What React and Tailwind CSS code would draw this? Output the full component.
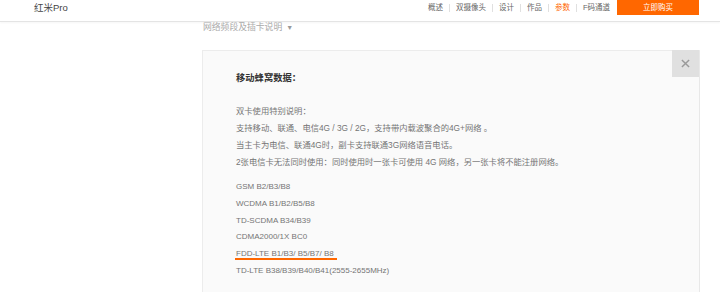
import React from 'react';

const navItems = ['概述', '双摄像头', '设计', '作品', '参数', 'F码通道'];

const notes = [
    '双卡使用特别说明：',
    '支持移动、联通、电信4G / 3G / 2G，支持带内载波聚合的4G+网络 。',
    '当主卡为电信、联通4G时，副卡支持联通3G网络语音电话。',
    '2张电信卡无法同时使用：同时使用时一张卡可使用 4G 网络，另一张卡将不能注册网络。',
];

const bands = [
    'GSM B2/B3/B8',
    'WCDMA B1/B2/B5/B8',
    'TD-SCDMA B34/B39',
    'CDMA2000/1X BC0',
    'FDD-LTE B1/B3/ B5/B7/ B8',
    'TD-LTE B38/B39/B40/B41(2555-2655MHz)',
];

const App = () => {
    return (
        <div
            className="w-[720px] h-[292px] overflow-hidden bg-white"
            style={{ fontFamily: '"Liberation Sans", "Noto Sans CJK SC", sans-serif' }}
        >
            {/* Header */}
            <div className="h-[22px] border-b border-[#e4e4e4] shadow-[0_1px_2px_rgba(0,0,0,0.04)] flex items-start justify-between pl-[34px] pr-[21px]">
                <div className="text-[9.5px] leading-[15px] text-[#444]">红米Pro</div>
                <div className="flex items-start">
                    <div className="flex items-center h-[15px] mr-[7px]">
                        {navItems.map((item, index) => (
                            <div key={index} className="flex items-center">
                                {index > 0 && <span className="w-px h-[8px] bg-[#e0e0e0] mx-[6px]"></span>}
                                <span className={`text-[7.5px] ${item === '参数' ? 'text-[#ff6700]' : 'text-[#666]'}`}>{item}</span>
                            </div>
                        ))}
                    </div>
                    <div className="w-[82px] h-[15px] bg-[#ff6700] text-white text-[7.5px] flex items-center justify-center">
                        立即购买
                    </div>
                </div>
            </div>

            {/* Content */}
            <div className="pl-[202px] pr-[20px]">
                <div className="h-[12px] flex items-center text-[8.8px] text-[#aaa] pl-px">
                    网络频段及插卡说明
                    <span className="ml-[4px] text-[7px] text-[#999]">▼</span>
                </div>

                <div className="relative mt-[16px] h-[260px] bg-[#fafafa] border border-[#ececec] border-r-[#e8e8e8] pl-[33px] pt-[21px]">
                    {/* Close */}
                    <div className="absolute -top-px right-0 w-[27px] h-[27px] bg-[#e0e0e0] flex items-center justify-center">
                        <svg width="9" height="9" viewBox="0 0 10 10">
                            <path d="M1 1 L9 9 M9 1 L1 9" stroke="#999" strokeWidth="1.6" />
                        </svg>
                    </div>

                    <div className="text-[9.3px] leading-[12px] font-bold text-[#333]">移动蜂窝数据：</div>

                    <div className="mt-[19px] text-[8.3px] leading-[17px] text-[#757575]">
                        {notes.map((line, index) => (
                            <div key={index}>{line}</div>
                        ))}
                    </div>

                    <div className="mt-[8px] text-[8px] leading-[16.8px] text-[#757575]">
                        {bands.map((band, index) => (
                            <div key={index}>
                                {band.startsWith('FDD') ? (
                                    <span className="border-b-2 border-[#ff6700] pr-[3px] pl-px -ml-px">{band}</span>
                                ) : (
                                    band
                                )}
                            </div>
                        ))}
                    </div>
                </div>
            </div>
        </div>
    );
};

export default App;
